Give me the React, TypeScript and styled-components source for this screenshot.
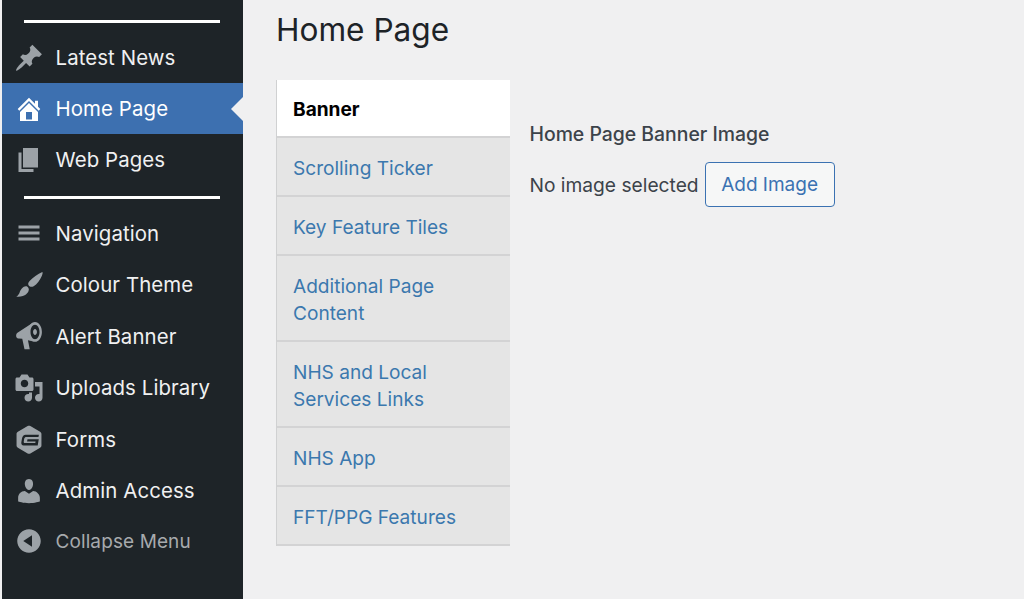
import React from "react";
import styled, { createGlobalStyle } from "styled-components";

const Global = createGlobalStyle`
  html, body { margin: 0; padding: 0; height: 100%; background: #f0f0f1; overflow: hidden; }
  body { font-family: Inter, "Liberation Sans", sans-serif; }
  #root { height: 100%; }
`;

const Page = styled.div`
  display: flex;
  width: 1024px;
  height: 599px;
  overflow: hidden;
  background: #f0f0f1;
`;

const Sidebar = styled.nav`
  flex: none;
  width: 241px;
  height: 599px;
  margin-left: 2px;
  padding-top: 19.5px;
  box-sizing: border-box;
  background: #1e2428;
  display: flex;
  flex-direction: column;
`;

const Separator = styled.hr<{ $before: number; $after: number }>`
  width: 196px;
  height: 3px;
  margin: ${(p) => p.$before}px 0 ${(p) => p.$after}px 22px;
  border: 0;
  background: #ffffff;
  flex: none;
`;

const Item = styled.div<{ $active?: boolean; $muted?: boolean; $height: number }>`
  position: relative;
  flex: none;
  height: ${(p) => p.$height}px;
  display: flex;
  align-items: center;
  gap: 12px;
  padding-left: 11.5px;
  background: ${(p) => (p.$active ? "#3d70b0" : "transparent")};
  color: ${(p) => (p.$muted ? "#a7aaad" : p.$active ? "#ffffff" : "#f0f0f1")};
  font-size: ${(p) => (p.$muted ? 19 : 20.4)}px;
  letter-spacing: 0.1px;
  ${(p) =>
    p.$active &&
    `&::after {
      content: "";
      position: absolute;
      right: 0;
      top: 50%;
      margin-top: -12px;
      border: 12px solid transparent;
      border-right-color: #f0f0f1;
      border-left-width: 0;
    }`}
`;

const Icon = styled.svg<{ $active?: boolean }>`
  flex: none;
  width: 30px;
  height: 30px;
  fill: ${(p) => (p.$active ? "#ffffff" : "#9ca2a7")};
`;

const Main = styled.main`
  flex: 1;
  min-width: 0;
  padding: 9px 0 0 33px;
  box-sizing: border-box;
`;

const Title = styled.h1`
  margin: 0 0 30px;
  height: 41px;
  line-height: 41px;
  font-size: 31.6px;
  font-weight: 400;
  color: #1d2327;
`;

const Columns = styled.div`
  display: flex;
  align-items: flex-start;
`;

const Tabs = styled.ul`
  flex: none;
  list-style: none;
  margin: 0;
  padding: 0;
  width: 234px;
  box-sizing: border-box;
  border-left: 1px solid #d0d1d2;
`;

const Tab = styled.li<{ $active?: boolean }>`
  box-sizing: border-box;
  padding: ${(p) => (p.$active ? "16px 16px 13px" : "17px 16px 13px")};
  line-height: 27px;
  font-size: 19.1px;
  font-weight: ${(p) => (p.$active ? 700 : 400)};
  color: ${(p) => (p.$active ? "#000000" : "#3b78ae")};
  background: ${(p) => (p.$active ? "#ffffff" : "#e5e5e5")};
  border-bottom: 2px solid #d3d3d4;
  width: 233px;
`;

const Panel = styled.section`
  padding: 41px 0 0 19.500px;
  color: #3c434a;
`;

const FieldLabel = styled.div`
  font-size: 19.4px;
  line-height: 27px;
  font-weight: 500;
  margin-bottom: 14px;
`;

const FieldRow = styled.div`
  display: flex;
  align-items: center;
  gap: 6px;
  font-size: 19.2px;
`;

const AddButton = styled.button`
  width: 130px;
  height: 45px;
  box-sizing: border-box;
  padding: 0;
  border: 1.5px solid #3b72b2;
  border-radius: 4px;
  background: #f6f7f7;
  color: #3b72b2;
  font: inherit;
  font-size: 19px;
`;

const paths: Record<string, string[]> = {
  pin: ["M10.44 3.02l1.82-1.82 6.36 6.35-1.83 1.82c-1.05-.68-2.48-.57-3.41.36l-.75.75c-.92.93-1.04 2.35-.35 3.41l-1.83 1.82-2.41-2.41-2.8 2.79c-.42.42-3.38 2.71-3.8 2.29s1.86-3.39 2.28-3.81l2.79-2.79L4.1 9.36l1.83-1.82c1.05.69 2.48.57 3.4-.36l.75-.75c.93-.92 1.05-2.35.36-3.41z"],
  home: ["M16 8.5l1.53 1.53-1.06 1.06L10 4.62l-6.47 6.47-1.06-1.06L10 2.5l4 4v-2h2v4zm-6-2.46l6 5.99V18H4v-5.97zM12 17v-5H8v5h4z"],
  page: ["M6 15V2h10v13H6zm-1 1h8v2H3V5h2v11z"],
  menu: ["M17 7V5H3v2h14zm0 4V9H3v2h14zm0 4v-2H3v2h14z"],
  brush: [
    "M18.900 1.300c.4.4.1 1.500-.3 2.500-1.300 3-3.300 5.800-5.500 7-1.300.7-2.700.4-3.300-.5-.6-.9-.4-2 .6-3 2-2.200 5.500-4.800 8.500-6z",
    "M8.400 10.900c.8.4 1.500 1.300 1.500 2 0 2-1.800 3.800-4 4.500-1.500.5-3 .6-4.400.4 1.100-.7 1.800-1.700 2.300-3 .6-1.800 2.500-4.300 4.600-3.900z",
  ],
  horn: [
    "M12.800 1L2.300 7.800C1.500 8.300 1.300 9.500 1.500 10.500 1.700 11.300 2.400 11.700 3.200 11.700L5.500 11.800 7 18.800H10.500L9.300 12.800 13 13.700C11 12.500 10 10.500 10 7.500 10 4.500 11 2.200 12.800 1z",
    "M14 .7c2.600 0 4.600 3 4.600 6.600s-2 6.600-4.600 6.600-4.600-3-4.600-6.600 2-6.600 4.600-6.600zM14 2.500c-1.700 0-3 2.100-3 4.800s1.300 4.800 3 4.800 3-2.100 3-4.800-1.300-4.800-3-4.800zM14 5.300c.7 0 1.300.9 1.300 2s-.6 2-1.300 2-1.300-.9-1.300-2 .6-2 1.300-2z",
  ],
  media: ["M13 11V4c0-.55-.45-1-1-1h-1.670L9 1H5L3.670 3H2c-.55 0-1 .45-1 1v7c0 .55.45 1 1 1h10c.55 0 1-.45 1-1zM7 4.500c1.380 0 2.500 1.120 2.500 2.500S8.380 9.500 7 9.500 4.500 8.380 4.500 7 5.620 4.500 7 4.500zM14 6h5v10.500c0 1.380-1.120 2.500-2.500 2.500S14 17.880 14 16.500s1.120-2.500 2.500-2.500c.17 0 .34.02.5.05V9h-3V6zm-4 8.050V13h2v3.500c0 1.380-1.120 2.500-2.500 2.500S7 17.880 7 16.500 8.120 14 9.500 14c.17 0 .34.02.5.05z"],
  forms: ["M10 1.200c.3 0 .6.1.9.2l6.500 3.800c.5.3.9.9.9 1.500v7.600c0 .6-.3 1.200-.9 1.500l-6.500 3.800c-.6.3-1.200.3-1.800 0l-6.500-3.800c-.5-.3-.9-.9-.9-1.500V6.700c0-.6.3-1.200.9-1.500l6.500-3.800c.3-.1.6-.2.9-.2zM7.800 7.100H16.600L16.300 8.700H8.300C7.500 8.700 7 9.100 6.800 9.800L6.500 11.600C6.400 12.300 6.700 12.700 7.300 12.700H14.200L14.400 11.700H8.700L9 10.200H16.500L15.800 14.300H6.400C5.200 14.300 4.700 13.400 4.900 12.200L5.300 9.800C5.600 8.100 6.500 7.100 7.800 7.100z"],
  users: ["M10 9.250c-2.270 0-2.730-3.440-2.730-3.440C7 4.020 7.820 2 9.970 2c2.160 0 2.980 2.020 2.710 3.810 0 0-.41 3.440-2.680 3.440zm0 2.570L12.720 10c2.390 0 4.520 2.330 4.520 4.530v2.490s-3.650 1.130-7.240 1.130c-3.650 0-7.240-1.130-7.240-1.130v-2.490c0-2.250 1.940-4.480 4.470-4.480z"],
  collapse: ["M10 2.160c4.330 0 7.840 3.510 7.840 7.840s-3.510 7.840-7.840 7.840S2.160 14.330 2.160 10 5.710 2.160 10 2.160zm2 11.720V6.120L6.180 9.970z"],
};

const MenuItem = ({ icon, label, height, active, muted }: { icon: string; label: string; height: number; active?: boolean; muted?: boolean }) => (
  <Item $active={active} $muted={muted} $height={height}>
    <Icon viewBox="0 0 20 20" $active={active} aria-hidden="true">
      {paths[icon].map((d) => (
        <path key={d} d={d} fillRule="evenodd" />
      ))}
    </Icon>
    {label}
  </Item>
);

const tabs: { label: React.ReactNode; active?: boolean }[] = [
  { label: "Banner", active: true },
  { label: "Scrolling Ticker" },
  { label: "Key Feature Tiles" },
  { label: <>Additional Page<br />Content</> },
  { label: <>NHS and Local<br />Services Links</> },
  { label: "NHS App" },
  { label: "FFT/PPG Features" },
];

export default function App() {
  return (
    <Page>
      <Global />
      <Sidebar>
        <Separator $before={0} $after={9.5} />
        <MenuItem icon="pin" label="Latest News" height={51} />
        <MenuItem icon="home" label="Home Page" height={51} active />
        <MenuItem icon="page" label="Web Pages" height={51} />
        <Separator $before={10.5} $after={9} />
        <MenuItem icon="menu" label="Navigation" height={51.5} />
        <MenuItem icon="brush" label="Colour Theme" height={51.5} />
        <MenuItem icon="horn" label="Alert Banner" height={51.5} />
        <MenuItem icon="media" label="Uploads Library" height={51.5} />
        <MenuItem icon="forms" label="Forms" height={51.5} />
        <MenuItem icon="users" label="Admin Access" height={51.5} />
        <MenuItem icon="collapse" label="Collapse Menu" height={49} muted />
      </Sidebar>
      <Main>
        <Title>Home Page</Title>
        <Columns>
          <Tabs>
            {tabs.map((t, i) => (
              <Tab key={i} $active={t.active}>{t.label}</Tab>
            ))}
          </Tabs>
          <Panel>
            <FieldLabel>Home Page Banner Image</FieldLabel>
            <FieldRow>
              No image selected
              <AddButton>Add Image</AddButton>
            </FieldRow>
          </Panel>
        </Columns>
      </Main>
    </Page>
  );
}
